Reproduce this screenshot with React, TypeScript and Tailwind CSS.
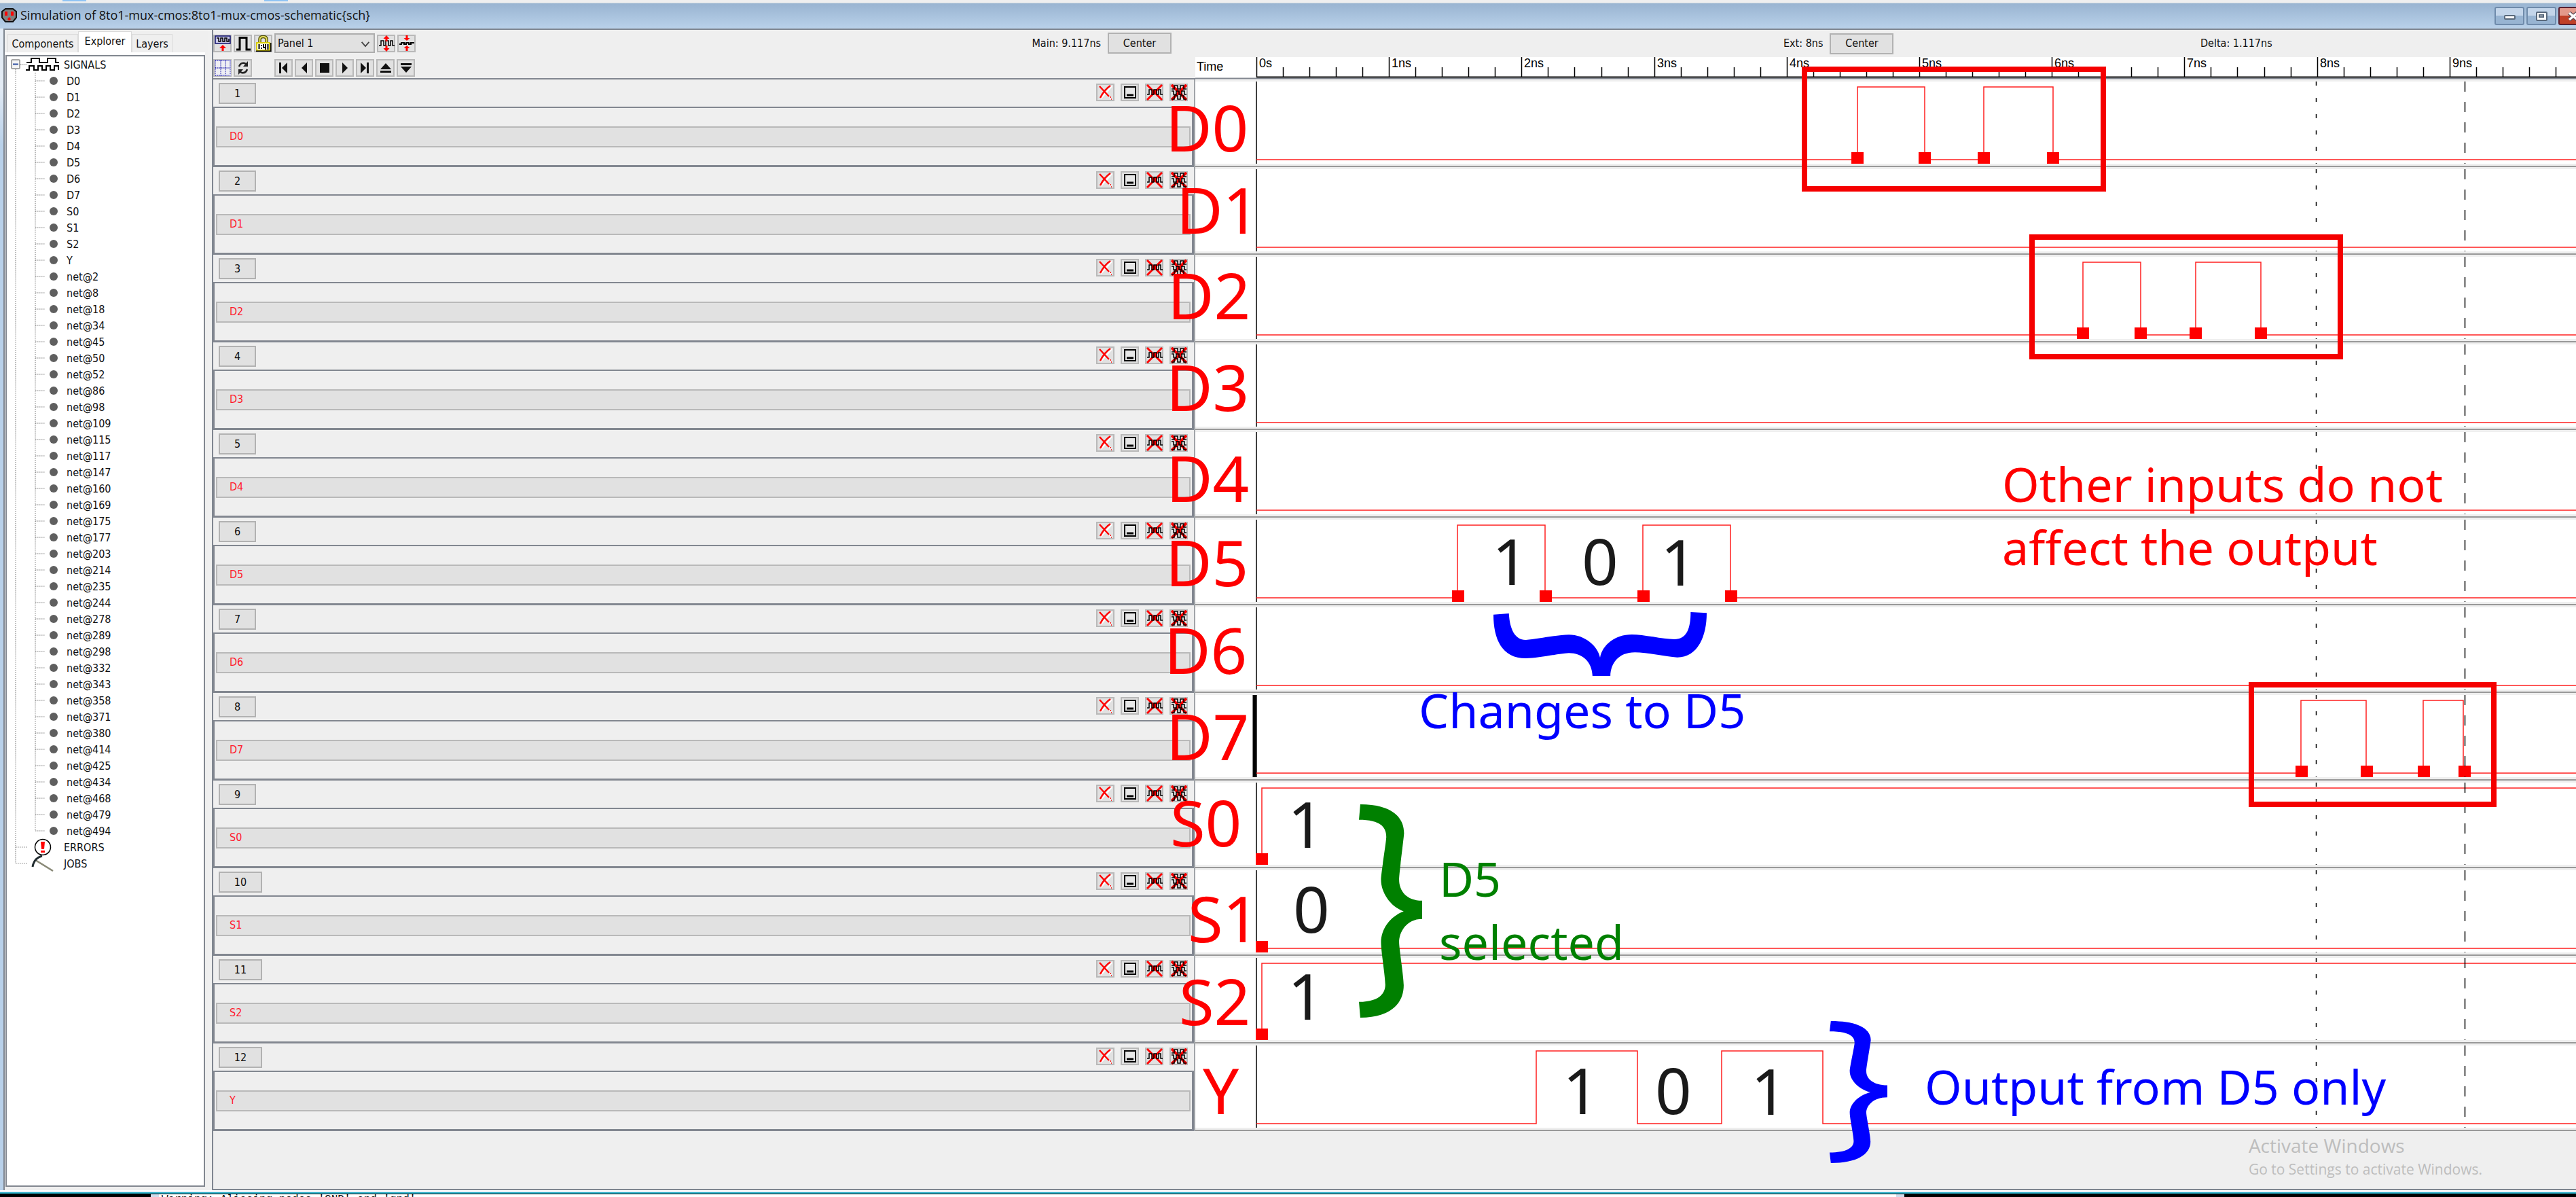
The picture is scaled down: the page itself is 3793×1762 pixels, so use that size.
import React from "react";

const SIGNALS = ["D0", "D1", "D2", "D3", "D4", "D5", "D6", "D7", "S0", "S1", "S2", "Y"];
const NETS = [
  2, 8, 18, 34, 45, 50, 52, 86, 98, 109, 115, 117, 147, 160, 169, 175, 177, 203, 214, 235, 244, 278, 289, 298, 332,
  343, 358, 371, 380, 414, 425, 434, 468, 479, 494,
];
const NODES = [...SIGNALS, ...NETS.map((n) => `net@${n}`)];

/* Wave geometry, in pixels from the left edge of the plot column */
const AXIS = 90;
const NS = 195.2;
const HIGH = 8;
const LOW = 115;
const FAR = 6000;

type Wave = { edges: number[]; startX?: number; markers: number[] };
const WAVES: Record<string, Wave> = {
  D0: { edges: [975, 1074, 1161, 1263], markers: [975, 1074, 1161, 1263] },
  D2: { edges: [1307, 1392, 1473, 1569], markers: [1307, 1392, 1473, 1569] },
  D5: { edges: [386, 515, 659, 788], markers: [387, 516, 660, 789] },
  D7: { edges: [1628, 1724, 1808, 1867], markers: [1629, 1725, 1809, 1869] },
  S0: { edges: [98], startX: 98, markers: [98] },
  S1: { edges: [], startX: 98, markers: [98] },
  S2: { edges: [98], startX: 98, markers: [98] },
  Y: { edges: [502, 651, 775, 924], markers: [] },
};

function wavePath(w?: Wave) {
  let d = `M${w?.startX ?? AXIS} ${LOW}`;
  let level = LOW;
  for (const x of w?.edges ?? []) {
    d += ` H${x}`;
    level = level === LOW ? HIGH : LOW;
    d += ` V${level}`;
  }
  return d + ` H${FAR}`;
}

const SQUARE_WAVE = "M1 15 H4 V8 H8 V15 H11 V8 H15 V15 H18 V8 H21 V15 H24";

function IconButton({ label, children }: { label: string; children: React.ReactNode }) {
  return (
    <button
      aria-label={label}
      className="flex h-[26px] w-[27px] shrink-0 items-center justify-center border-2 border-[#b9b9b9] bg-[#e1e1e1]"
    >
      <svg viewBox="0 0 24 24" className="size-6 shrink-0" fill="none" stroke="black" strokeWidth="2">
        {children}
      </svg>
    </button>
  );
}

function TextButton({ children, className = "" }: { children: React.ReactNode; className?: string }) {
  return (
    <button className={`h-[31px] border-2 border-[#b2b2b2] bg-[#e1e1e1] text-center leading-none ${className}`}>
      {children}
    </button>
  );
}

function Toolbar() {
  return (
    <div className="flex flex-col gap-[8px] pt-[5px]">
      <div className="flex h-[29px] items-center gap-[3px]">
        <IconButton label="Add panel">
          <rect x="1" y="1" width="22" height="11" fill="#c8c8e8" stroke="#10106e" strokeWidth="1.5" />
          <path d="M3 4 H6 V9 H9 V4 H12 V9 H15 V4 H18 V9 H21 V5" strokeWidth="1.5" />
          <path d="M12 14 L17 19 H13.5 V23 H10.5 V19 H7 Z" fill="red" stroke="none" />
        </IconButton>
        <IconButton label="Add digital panel">
          <path d="M2 21 H7 V3.5 H17 V21 H23" strokeWidth="3" />
        </IconButton>
        <IconButton label="Lock time">
          <path d="M6.5 11 V6 Q6.5 2 11.5 2 Q16.5 2 16.5 6 V11" stroke="#4d4d00" strokeWidth="4.5" />
          <path d="M6.5 11 V6 Q6.5 2 11.5 2 Q16.5 2 16.5 6 V11" stroke="#e8e060" strokeWidth="2" />
          <rect x="2" y="11" width="19" height="11" fill="#fff" stroke="#d8cc00" />
          <path d="M1 23.2 H22.8 V11" strokeWidth="1.5" />
          <path d="M5.5 13 V20 M9 14 V16 M9 18 V20 M12 13 V18 H15 M15 13 V21 M18.5 13 V21" />
        </IconButton>
        <div className="relative">
          <select
            aria-label="Panel"
            className="block h-[29px] w-[148px] appearance-none border-2 border-[#adadad] bg-[#e1e1e1] pl-[3px] leading-none"
          >
            <option>Panel 1</option>
          </select>
          <svg viewBox="0 0 14 10" className="pointer-events-none absolute top-[12px] right-[7px] h-[9px] w-[14px]">
            <path d="M1 1 L7 8 L13 1" fill="none" stroke="#444" strokeWidth="2" />
          </svg>
        </div>
        <IconButton label="Grow panels">
          <path d={SQUARE_WAVE} strokeWidth="1.5" />
          <path d="M12 0 L16.5 5 H13.5 V9 H10.5 V5 H7.5 Z M12 24 L16.5 19 H13.5 V15 H10.5 V19 H7.5 Z" fill="red" stroke="none" />
        </IconButton>
        <IconButton label="Shrink panels">
          <path d="M1 13 H4 V11 H8 V13 H11 V11 H15 V13 H18 V11 H23" />
          <path d="M12 8 L16.5 4 H13.5 V0 H10.5 V4 H7.5 Z M12 15 L16.5 19 H13.5 V23 H10.5 V19 H7.5 Z" fill="red" stroke="none" />
        </IconButton>
      </div>
      <div className="flex h-[27px] items-center gap-[3px]">
        <IconButton label="Toggle grid">
          <rect x="0" y="0" width="24" height="24" fill="#eeeef4" stroke="none" />
          <path
            d="M1 1 H23 M1 12 H23 M1 23 H23 M1 1 V23 M9 1 V23 M16 1 V23 M23 1 V23"
            stroke="#2828b0"
            strokeWidth="1.5"
            strokeDasharray="1.5 1.5"
          />
        </IconButton>
        <IconButton label="Refresh">
          <path d="M6 10 Q8 4 14 5 L18 7 M18 14 Q16 20 10 19 L6 17" stroke="#222" strokeWidth="2.5" />
          <path d="M19 2 V10 H12 Z M5 22 V14 H12 Z" fill="#222" stroke="none" />
        </IconButton>
        <span className="w-[27px]" />
        <IconButton label="Rewind to start">
          <path d="M5 4 H8 V20 H5 Z M17 4 V20 L9 12 Z" fill="#111" stroke="none" />
        </IconButton>
        <IconButton label="Play backwards">
          <path d="M16 4 V20 L8 12 Z" fill="#111" stroke="none" />
        </IconButton>
        <IconButton label="Stop">
          <path d="M5 5 H19 V19 H5 Z" fill="#111" stroke="none" />
        </IconButton>
        <IconButton label="Play">
          <path d="M8 4 V20 L16 12 Z" fill="#111" stroke="none" />
        </IconButton>
        <IconButton label="Move to end">
          <path d="M5 4 V20 L13 12 Z M14 4 H17 V20 H14 Z" fill="#111" stroke="none" />
        </IconButton>
        <IconButton label="Faster">
          <path d="M12 5 L20 14 H4 Z M4 16 H20 V19 H4 Z" fill="#111" stroke="none" />
        </IconButton>
        <IconButton label="Slower">
          <path d="M12 19 L20 10 H4 Z M4 5 H20 V8 H4 Z" fill="#111" stroke="none" />
        </IconButton>
      </div>
    </div>
  );
}

function PanelButtons() {
  return (
    <div className="flex gap-[9px] pt-px">
      <IconButton label="Close panel">
        <path d="M4 4 L20 21 M21 3 L5 21" stroke="white" strokeWidth="2" />
        <path d="M3 3 L17 18 M19 2 Q10 8 4 20" stroke="red" strokeWidth="2.5" />
        <path d="M18 19 h2 M20 22 h1" stroke="red" strokeWidth="1.5" />
      </IconButton>
      <IconButton label="Hide panel">
        <rect x="4" y="4" width="16" height="16" fill="#e8e8e8" strokeWidth="2" />
        <path d="M7 16 H17" strokeWidth="3" />
      </IconButton>
      <IconButton label="Delete signal">
        <path d="M1 1 L23 23 M23 1 L1 23" stroke="red" strokeWidth="3" />
        <rect x="8" y="8" width="8" height="7" fill="red" stroke="none" />
        <path d={SQUARE_WAVE} strokeWidth="1.5" />
      </IconButton>
      <IconButton label="Delete all signals">
        <path d="M1 1 L23 23 M23 1 L1 23" stroke="red" strokeWidth="4" />
        <path
          d="M1 7 H5 V2 H10 V7 H14 V2 H19 V7 H23 M1 10 H4 V15 H8 V10 H12 V15 H16 V10 H20 V15 H23 M1 22 H5 V17 H10 V22 H14 V17 H19 V22 H23"
          strokeWidth="1.5"
        />
      </IconButton>
    </div>
  );
}

function Explorer() {
  return (
    <aside className="flex w-[301px] shrink-0 flex-col border-t-2 border-l-2 border-[#7f8690] bg-[#efefef]">
      <div role="tablist" className="flex h-[33px] items-end pl-[4px] leading-none">
        <button role="tab" className="h-[27px] w-[104px] border border-b-0 border-[#dadada] pt-[2px] text-center">
          Components
        </button>
        <button role="tab" aria-selected className="h-[31px] w-[79px] border border-b-0 border-[#dadada] bg-white pb-[2px] text-center">
          Explorer
        </button>
        <button role="tab" className="h-[27px] w-[60px] border border-b-0 border-[#dadada] pt-[2px] text-center">
          Layers
        </button>
      </div>
      <div className="mr-[4px] mb-[5px] flex-1 border-t-4 border-l border-white">
        <div className="h-full border-2 border-[#828790] bg-white">
          <ul className="leading-[23px]">
            <li className="flex h-6 items-center">
              <svg width="83" height="24" className="mr-px shrink-0" fill="none">
                <rect x="7" y="5" width="12" height="13" rx="1" fill="#f4f4f4" stroke="#8a8a8a" strokeWidth="1.5" />
                <path d="M9 11.5 H17" stroke="#3050a0" strokeWidth="2" />
                <path d="M20 12 H30 M13 19 V24" stroke="#777" strokeDasharray="1.5 1.5" />
                <path d="M29 9 H36 V3 H48 V9 H60 V3 H72 V9 H77" stroke="black" strokeWidth="2" />
                <path d="M28 20 H33 V14 H40 V20 H46 V14 H52 V20 H58 V14 H64 V20 H70 V14 H76 V20" stroke="black" strokeWidth="2" />
              </svg>
              SIGNALS
            </li>
            {NODES.map((name, i) => (
              <li key={name} className="flex h-6 items-center">
                <svg width="83" height="24" className="mr-[5px] shrink-0" fill="none">
                  <path
                    d={`M13 0 V24 M42 0 V${i === NODES.length - 1 ? 12 : 24} M42 12 H57`}
                    stroke="#777"
                    strokeDasharray="1.5 1.5"
                  />
                  <circle cx="69" cy="12" r="6" fill="#5f5f5f" />
                </svg>
                {name}
              </li>
            ))}
            <li className="flex h-6 items-center">
              <svg width="83" height="24" className="mr-px shrink-0 overflow-visible" fill="none">
                <path d="M13 0 V24 M13 12 H30" stroke="#777" strokeDasharray="1.5 1.5" />
                <circle cx="53" cy="12" r="11.5" fill="white" stroke="black" strokeWidth="1.5" />
                <path d="M50 4 H56 L55 15 H51 Z M50 17 H56 V20 H50 Z" fill="red" />
              </svg>
              ERRORS
            </li>
            <li className="flex h-6 items-center">
              <svg width="83" height="24" className="mr-px shrink-0" fill="none">
                <path d="M13 0 V12 M13 12 H30" stroke="#777" strokeDasharray="1.5 1.5" />
                <path d="M42 7 L68 23" stroke="#8a8a78" strokeWidth="2.5" />
                <path d="M52 1 Q40 4 38 17" stroke="#222c30" strokeWidth="3" />
              </svg>
              JOBS
            </li>
          </ul>
        </div>
      </div>
    </aside>
  );
}

function Ruler() {
  const ticks = Array.from({ length: 50 }, (_, i) => i);
  return (
    <svg
      className="block h-[33px] w-full shrink-0 bg-white font-['Liberation_Sans',sans-serif] text-[18px]"
      aria-label="Time ruler"
    >
      <text x="2" y="20">
        Time
      </text>
      {ticks.map((i) => {
        const x = Math.round(AXIS + (i * NS) / 5) + 0.5;
        const major = i % 5 === 0;
        return <path key={i} d={`M${x} ${major ? 0 : 15} V30`} stroke="black" strokeWidth="1.5" />;
      })}
      {ticks.slice(0, 10).map((n) => (
        <text key={n} x={Math.round(AXIS + n * NS) + 4} y="15">
          {n === 0 ? "0s" : `${n}ns`}
        </text>
      ))}
      <path d={`M${AXIS} 29.5 H${FAR}`} stroke="black" strokeWidth="2" />
      <path d={`M0 31.5 H${FAR}`} stroke="#828790" strokeWidth="2" />
    </svg>
  );
}

function SignalRow({ index, name }: { index: number; name: string }) {
  const wave = WAVES[name];
  return (
    <section className="flex h-[129px]" aria-label={name}>
      <div className="flex w-[1446px] shrink-0 flex-col border-r-2 border-[#a0a4a8] pt-[5px]">
        <div className="flex h-[35px] items-start justify-between pr-[9px] pl-2">
          <TextButton className={index > 9 ? "w-[64px]" : "w-[55px]"}>{index}</TextButton>
          <PanelButtons />
        </div>
        <div className="flex flex-1 items-center border-2 border-r-[3px] border-b-[3px] border-[#828790] px-0.5">
          <button className="h-[31px] w-full border-2 border-[#b9b9b9] bg-[#e1e1e1] pl-[18px] text-left leading-none text-[#ff1a2e]">
            {name}
          </button>
        </div>
      </div>
      <div className="min-w-0 flex-1 overflow-hidden border-b-2 border-[#999] pt-[3px] pb-[3px]">
        <svg className="block h-[121px] w-full bg-white" fill="none">
          <path d={`M${AXIS} 0 V121`} stroke="black" strokeWidth="1.5" />
          {name === "D7" && <path d="M87 0 V121" stroke="black" strokeWidth="5" />}
          <path d={wavePath(wave)} stroke="#ff2020" strokeWidth="1.5" />
          {wave?.markers.map((x) => <rect key={x} x={x - 9} y="104" width="18" height="18" fill="red" />)}
          <path d="M1650.5 0 V121" stroke="black" strokeWidth="1.5" strokeDasharray="6 18" />
          <path d="M1869.5 0 V121" stroke="black" strokeWidth="1.5" strokeDasharray="15 15" />
        </svg>
      </div>
    </section>
  );
}

const VERTICAL_BRACE =
  "M4 0 C89 0 137 36 137 101 C135 131 122 241 122 263 C122 301 144 336 192 336 L192 400 C144 400 122 446 122 481 C122 501 136 601 136 631 C136 701 89 744 4 744 L0 689 C54 688 80 666 80 629 C80 601 67 511 67 481 C67 436 94 391 136 373 C94 356 67 306 67 263 C67 241 83 131 83 114 C83 71 54 54 0 54 Z";
const DOWN_BRACE =
  "M0 11 L51 6 C54 80 73 124 107 123 C147 119 212 100 249 100 C302 100 344 150 352 201 C359 147 400 99 457 99 C497 99 557 119 597 120 C637 120 651 75 651 0 L704 4 C704 107 675 200 607 200 C567 197 507 178 467 178 C412 178 387 227 386 282 L327 282 C325 217 292 181 249 181 C207 185 147 204 107 204 C27 204 0 117 0 11 Z";

const LABELS: [string, string][] = [
  ["D0", "left-[1716px] top-[140px]"],
  ["D1", "left-[1732px] top-[261px]"],
  ["D2", "left-[1719px] top-[387px]"],
  ["D3", "left-[1717px] top-[522px]"],
  ["D4", "left-[1717px] top-[656px]"],
  ["D5", "left-[1716px] top-[780px]"],
  ["D6", "left-[1714px] top-[909px]"],
  ["D7", "left-[1717px] top-[1036px]"],
  ["S0", "left-[1723px] top-[1163px]"],
  ["S1", "left-[1749px] top-[1304px]"],
  ["S2", "left-[1736px] top-[1426px]"],
  ["Y", "left-[1771px] top-[1557px]"],
];

const BITS: [string, string][] = [
  ["1", "left-[2197px] top-[778px]"],
  ["0", "left-[2329px] top-[778px]"],
  ["1", "left-[2445px] top-[779px]"],
  ["1", "left-[1896px] top-[1165px]"],
  ["0", "left-[1904px] top-[1290px]"],
  ["1", "left-[1896px] top-[1418px]"],
  ["1", "left-[2301px] top-[1557px]"],
  ["0", "left-[2437px] top-[1557px]"],
  ["1", "left-[2578px] top-[1558px]"],
];

/* Hand-placed notes drawn over the waveform window */
function Annotations() {
  return (
    <div className="pointer-events-none absolute inset-0 overflow-hidden font-['Noto_Sans',sans-serif] text-[70px] leading-[93px] whitespace-nowrap">
      {LABELS.map(([text, place]) => (
        <span key={text} className={`absolute text-[94px] leading-none text-[#ff0000] ${place}`}>
          {text}
        </span>
      ))}
      {BITS.map(([text, place]) => (
        <span key={place} className={`absolute text-[94px] leading-none text-[#1a1a1a] ${place}`}>
          {text}
        </span>
      ))}
      <p className="absolute top-[666px] left-[2948px] text-[#ff0000]">
        Other inputs do not
        <br />
        affect the output
      </p>
      <p className="absolute top-[999px] left-[2089px] text-[#0000ff]">Changes to D5</p>
      <p className="absolute top-[1247px] left-[2119px] text-[#008000]">
        D5
        <br />
        selected
      </p>
      <p className="absolute top-[1553px] left-[2834px] text-[#0000ff]">Output from D5 only</p>

      <div className="absolute top-[98px] left-[2653px] h-[184px] w-[448px] border-8 border-[#f50000]" />
      <div className="absolute top-[345px] left-[2988px] h-[184px] w-[462px] border-8 border-[#f50000]" />
      <div className="absolute top-[1004px] left-[3311px] h-[184px] w-[365px] border-8 border-[#f50000]" />

      <svg viewBox="0 0 704 282" preserveAspectRatio="none" className="absolute top-[901px] left-[2199px] h-[94px] w-[314px]">
        <path d={DOWN_BRACE} fill="#0000ff" />
      </svg>
      <svg viewBox="0 0 192 744" preserveAspectRatio="none" className="absolute top-[1184px] left-[2001px] h-[314px] w-[93px]">
        <path d={VERTICAL_BRACE} fill="#008000" />
      </svg>
      <svg viewBox="0 0 192 744" preserveAspectRatio="none" className="absolute top-[1503px] left-[2694px] h-[209px] w-[85px]">
        <path d={VERTICAL_BRACE} fill="#0000ff" />
      </svg>
    </div>
  );
}

function TitleBar() {
  const box =
    "flex h-[27px] items-center justify-center rounded-[3px] border-2 border-[#6f8bab] bg-linear-to-b from-[#c3d5ea] from-50% to-[#98b4d2] to-50%";
  return (
    <header className="flex h-[38px] shrink-0 items-center overflow-hidden border-t border-[#c8d4de] bg-linear-to-b from-[#99b4d1] to-[#b9d1ea] pl-[2px] font-['Open_Sans',sans-serif] text-[18px] leading-none text-[#111]">
      <div className="flex flex-1 items-center gap-[5px] pb-[3px]">
        <svg viewBox="0 0 23 21" className="h-[21px] w-[23px] shrink-0">
          <path d="M6 1 H17 L22 5 V14 L17 20 H6 L1 14 V5 Z" fill="#808080" stroke="#111" strokeWidth="2" />
          <path d="M5 5 H9 V11 H5 Z M14 5 H18 V11 H14 Z M11.5 13 L14 16 L12.5 18 H10.5 L9 16 Z" fill="red" />
        </svg>
        <h1 className="whitespace-nowrap">{"Simulation of 8to1-mux-cmos:8to1-mux-cmos-schematic{sch}"}</h1>
      </div>
      <div className="-mr-[18px] flex shrink-0 gap-[3px]">
        <button aria-label="Minimize" className={`${box} w-[44px]`}>
          <span className="mt-1 h-[7px] w-[17px] rounded-xs border-2 border-[#59697c] bg-white" />
        </button>
        <button aria-label="Maximize" className={`${box} w-[44px]`}>
          <span className="flex h-[14px] w-[17px] items-center justify-center rounded-xs border-2 border-[#59697c] bg-white">
            <span className="h-[5px] w-[8px] border-2 border-[#59697c]" />
          </span>
        </button>
        <button
          aria-label="Close"
          className="flex h-[27px] w-[44px] items-center rounded-[3px] border-2 border-[#5a2030] bg-linear-to-b from-[#e39a8c] from-50% to-[#c04028] to-50% pl-[11px]"
        >
          <svg viewBox="0 0 18 14" className="h-[14px] w-[18px]">
            <path d="M3 2 L15 12 M15 2 L3 12" stroke="#5a4a55" strokeWidth="6" />
            <path d="M3 2 L15 12 M15 2 L3 12" stroke="white" strokeWidth="3.5" />
          </svg>
        </button>
      </div>
    </header>
  );
}

export default function App() {
  return (
    <div className="relative flex min-h-screen w-full flex-col overflow-hidden bg-[#efefef] font-['DejaVu_Sans_Condensed','DejaVu_Sans',sans-serif] text-[16px] text-[#101010]">
      <div className="flex h-[4px] shrink-0 bg-[#efefef]">
        <span className="ml-[92px] h-[2px] w-[35px] bg-[#90c4f4]" />
        <span className="ml-[262px] h-[2px] w-[35px] bg-[#90c4f4]" />
      </div>
      <TitleBar />

      <main className="flex flex-1 bg-[#f0f0f0]">
        <div className="w-[5px] shrink-0 bg-linear-to-b from-[#e4ecf5] from-5% to-[#b9d1ea] to-10%" />
        <Explorer />
        <div className="flex min-w-0 flex-1 flex-col border-t-2 border-[#7f8690]">
          <div className="ml-[6px] flex flex-1 flex-col border-b-2 border-l-2 border-[#7f8690] bg-[#efefef]">
            <div className="flex h-[73px] shrink-0">
              <div className="flex w-[1446px] shrink-0 justify-between border-b-2 border-[#828790] pr-[35px]">
                <Toolbar />
                <div className="flex items-center gap-[10px] self-start pt-[4px]">
                  <span>Main: 9.117ns</span>
                  <TextButton className="w-[94px]">Center</TextButton>
                </div>
              </div>
              <div className="flex min-w-0 flex-1 flex-col">
                <div className="flex h-[40px] shrink-0 items-center">
                  <div className="flex w-[1480px] shrink-0 items-center gap-[10px] pl-[866px]">
                    <span>Ext: 8ns</span>
                    <TextButton className="w-[94px]">Center</TextButton>
                  </div>
                  <span>Delta: 1.117ns</span>
                </div>
                <Ruler />
              </div>
            </div>
            {SIGNALS.map((name, i) => (
              <SignalRow key={name} index={i + 1} name={name} />
            ))}
            <div className="flex flex-1 items-start justify-end pt-[4px] pr-[138px]">
              <div className="flex flex-col gap-1 font-['Open_Sans',sans-serif] text-[#bdbdbd]">
                <p className="text-[28px] leading-[34px]">Activate Windows</p>
                <p className="text-[21px] leading-7">Go to Settings to activate Windows.</p>
              </div>
            </div>
          </div>
        </div>
      </main>

      <div className="h-[5px] shrink-0 border-t-2 border-b-2 border-t-white border-b-[#2fb4cc] bg-[#cfe0ee]" />
      <footer className="flex h-[5px] shrink-0 overflow-hidden border-t border-black bg-black">
        <div className="ml-[222px] w-[2582px] border-x-[12px] border-[#cfdcec] bg-white pl-[4px] font-['Liberation_Mono',monospace] leading-none whitespace-nowrap">
          Warning: Aliasing nodes 'GND' and 'gnd'
        </div>
      </footer>

      <Annotations />
    </div>
  );
}
